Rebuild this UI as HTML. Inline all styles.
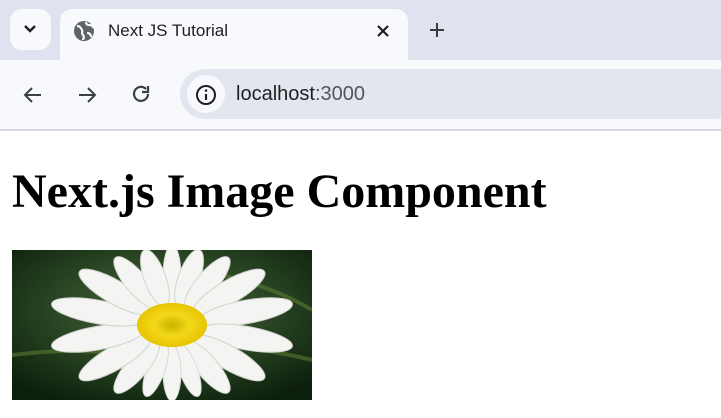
<!DOCTYPE html>
<html><head><style>
html,body{margin:0;padding:0;width:721px;height:418px;overflow:hidden;background:#fff;font-family:"Liberation Sans",sans-serif}
.top{position:absolute;left:0;top:0;width:721px;height:60px;background:#dfe3ef}
.btn1{position:absolute;left:10px;top:9px;width:41px;height:41px;border-radius:12px;background:#f8f9fd}
.tab{position:absolute;left:60px;top:9px;width:348px;height:52px;background:#f8f9fd;border-radius:12px 12px 0 0}
.tool{position:absolute;left:0;top:60px;width:721px;height:70px;background:#f8f9fd}
.addr{position:absolute;left:180px;top:69px;width:560px;height:50px;border-radius:25px;background:#e3e6ef}
.info{position:absolute;left:187px;top:75px;width:38px;height:38px;border-radius:50%;background:#f8f9fd}
.line{position:absolute;left:0;top:129px;width:721px;height:2px;background:#d6d9e2}
.t{position:absolute;color:#1f1f1f;font-size:17px}
h1{position:absolute;left:12px;top:164px;margin:0;font-family:"Liberation Serif",serif;font-weight:bold;font-size:48px;line-height:56px;color:#000;white-space:nowrap}
</style></head><body>
<div class="top"></div>
<div class="btn1"></div>
<svg style="position:absolute;left:23px;top:23px" width="14" height="12"><path d="M2 3l5 5 5-5" stroke="#1f1f1f" stroke-width="2.4" fill="none"/></svg>
<div class="tab"></div>
<svg style="position:absolute;left:73px;top:20px" width="22" height="22" viewBox="0 0 22 22"><circle cx="11" cy="11" r="10" fill="#5f6368"/><path d="M4 6c3 0 4 2 5 4s-1 3 1 5 0 4 0 5M13 2c0 3 2 3 4 3s3 2 4 3M14 13c2 0 4 1 4 4" stroke="#f8f9fd" stroke-width="2.2" fill="none"/></svg>
<div class="t" style="left:108px;top:21px">Next JS Tutorial</div>
<svg style="position:absolute;left:376px;top:24px" width="14" height="14"><path d="M2 2l10 10M12 2L2 12" stroke="#1f1f1f" stroke-width="2.2"/></svg>
<svg style="position:absolute;left:428px;top:21px" width="18" height="18"><path d="M9 2v14M2 9h14" stroke="#3c3c3c" stroke-width="2"/></svg>
<div class="tool"></div>
<div class="addr"></div>
<div class="info"></div>
<svg style="position:absolute;left:194px;top:83px" width="24" height="24" viewBox="0 0 24 24"><circle cx="12" cy="12" r="9" stroke="#1f1f1f" stroke-width="2" fill="none"/><path d="M12 11v6" stroke="#1f1f1f" stroke-width="2.2"/><circle cx="12" cy="7.5" r="1.3" fill="#1f1f1f"/></svg>
<svg style="position:absolute;left:22px;top:84px" width="22" height="22" viewBox="0 0 22 22"><path d="M19 11H4M10 4l-7 7 7 7" stroke="#3c4043" stroke-width="2" fill="none"/></svg>
<svg style="position:absolute;left:76px;top:84px" width="22" height="22" viewBox="0 0 22 22"><path d="M3 11h15M12 4l7 7-7 7" stroke="#3c4043" stroke-width="2" fill="none"/></svg>
<svg style="position:absolute;left:130px;top:83px" width="22" height="22" viewBox="0 0 22 22"><path d="M18 11a7 7 0 1 1-2-5" stroke="#3c4043" stroke-width="2.2" fill="none"/><path d="M18 3v6h-6" stroke="#3c4043" stroke-width="2.2" fill="none"/></svg>
<div class="t" style="left:236px;top:83px;font-size:20px">localhost<span style="color:#555">:3000</span></div>
<div class="line"></div>
<h1>Next.js Image Component</h1>
<svg style="position:absolute;left:12px;top:250px" width="300" height="150" viewBox="0 0 300 150">
<defs><radialGradient id="bg" cx="0.5" cy="0.4" r="0.7"><stop offset="0" stop-color="#4c6a3c"/><stop offset="0.6" stop-color="#243f1f"/><stop offset="1" stop-color="#0c1e0c"/></radialGradient>
<radialGradient id="y" cx="0.5" cy="0.5" r="0.5"><stop offset="0" stop-color="#c9b300"/><stop offset="0.5" stop-color="#f3d81a"/><stop offset="1" stop-color="#e6c400"/></radialGradient></defs>
<rect width="300" height="150" fill="url(#bg)"/>
<path d="M0 105 Q80 95 140 110 M180 20 Q250 30 300 60 M210 95 Q260 100 300 110" stroke="#5a7a32" stroke-width="4" fill="none" opacity="0.6"/>
<g transform="translate(160,75)">
<g fill="#f4f5f2" stroke="#d0d4ce" stroke-width="0.8">
<ellipse cx="0" cy="-50" rx="9" ry="30" transform="rotate(0)"/>
<ellipse cx="0" cy="-50" rx="9" ry="30" transform="rotate(20) scale(1.2,1)"/>
<ellipse cx="0" cy="-50" rx="9" ry="30" transform="rotate(40) scale(1.2,1.1)"/>
<ellipse cx="0" cy="-55" rx="9" ry="34" transform="rotate(60) scale(1.3,1.2)"/>
<ellipse cx="0" cy="-58" rx="9" ry="36" transform="rotate(80) scale(1.3,1.3)"/>
<ellipse cx="0" cy="-58" rx="9" ry="36" transform="rotate(100) scale(1.3,1.3)"/>
<ellipse cx="0" cy="-55" rx="9" ry="34" transform="rotate(120) scale(1.3,1.2)"/>
<ellipse cx="0" cy="-50" rx="9" ry="30" transform="rotate(140) scale(1.2,1.1)"/>
<ellipse cx="0" cy="-48" rx="9" ry="28" transform="rotate(160)"/>
<ellipse cx="0" cy="-48" rx="9" ry="28" transform="rotate(180)"/>
<ellipse cx="0" cy="-48" rx="9" ry="28" transform="rotate(200)"/>
<ellipse cx="0" cy="-50" rx="9" ry="30" transform="rotate(220) scale(1.2,1.1)"/>
<ellipse cx="0" cy="-55" rx="9" ry="34" transform="rotate(240) scale(1.3,1.2)"/>
<ellipse cx="0" cy="-58" rx="9" ry="36" transform="rotate(260) scale(1.3,1.3)"/>
<ellipse cx="0" cy="-58" rx="9" ry="36" transform="rotate(280) scale(1.3,1.3)"/>
<ellipse cx="0" cy="-55" rx="9" ry="34" transform="rotate(300) scale(1.3,1.2)"/>
<ellipse cx="0" cy="-50" rx="9" ry="30" transform="rotate(320) scale(1.2,1.1)"/>
<ellipse cx="0" cy="-50" rx="9" ry="30" transform="rotate(340) scale(1.2,1)"/>
</g>
<ellipse cx="0" cy="0" rx="35" ry="22" fill="url(#y)"/>
</g>
</svg>
</body></html>
